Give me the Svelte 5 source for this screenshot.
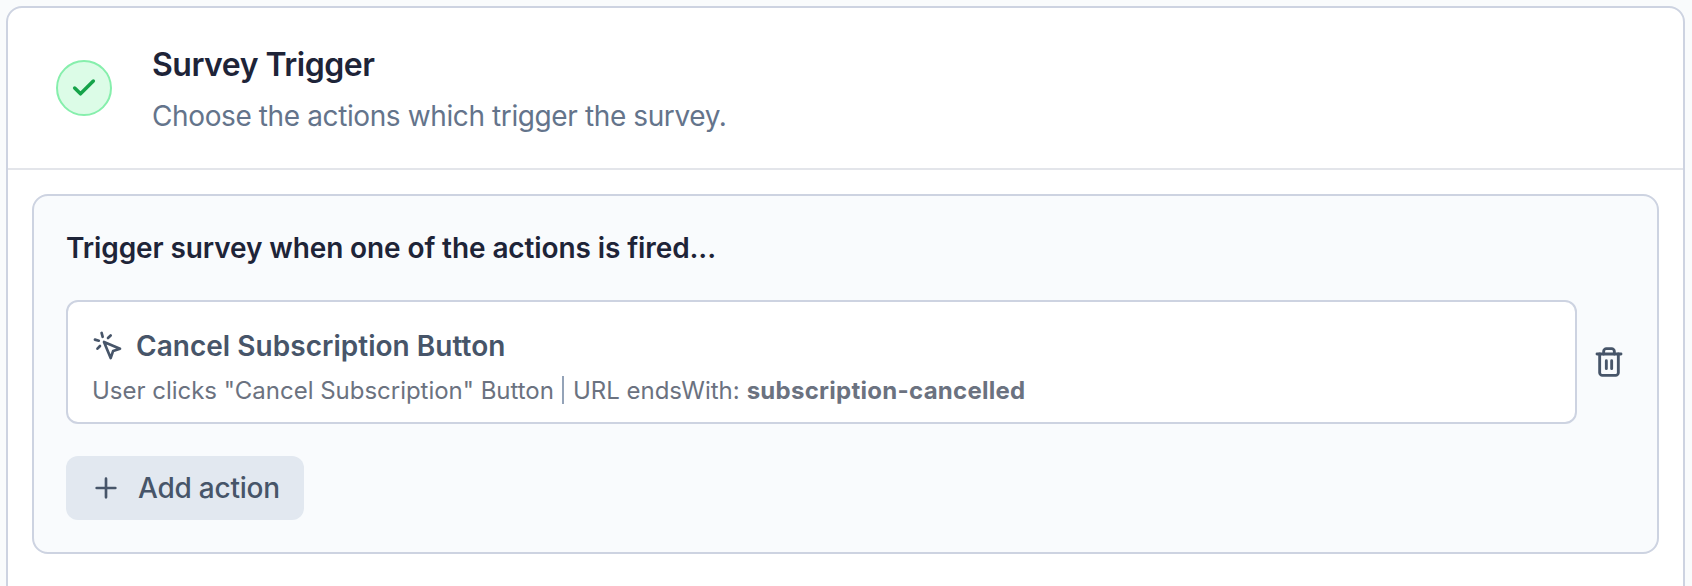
<script>
  const actions = [
    {
      name: 'Cancel Subscription Button',
      description: 'User clicks "Cancel Subscription" Button',
      rule: 'URL endsWith:',
      value: 'subscription-cancelled'
    }
  ];
</script>

<main class="page">
  <section class="card">
    <header class="card-header">
      <span class="status">
        <svg viewBox="0 0 24 24" width="28" height="28" stroke-width="3" class="icon">
          <path d="M20 6 9 17l-5-5" />
        </svg>
      </span>
      <div class="titles">
        <h1>Survey Trigger</h1>
        <p class="subtitle">Choose the actions which trigger the survey.</p>
      </div>
    </header>

    <div class="panel">
      <h2>Trigger survey when one of the actions is fired...</h2>

      {#each actions as action}
        <div class="row">
          <article class="action">
            <div class="action-title">
              <svg viewBox="0 0 24 24" width="32" height="32" stroke-width="2" class="icon">
                <path d="m9 9 5 12 1.8-5.2L21 14Z" />
                <path d="M7.2 2.2 8 5.1" />
                <path d="m5.1 8-2.9-.8" />
                <path d="M14 4.1 12 6" />
                <path d="m6 12-1.9 2" />
              </svg>
              <h3>{action.name}</h3>
            </div>
            <div class="details">
              <span class="description">{action.description}</span>
              <span class="separator"></span>
              <span class="rule">{action.rule}</span>
              <strong>{action.value}</strong>
            </div>
          </article>
          <button class="remove" aria-label="Remove action">
            <svg viewBox="0 0 24 24" width="32" height="32" stroke-width="2.15" class="icon">
              <path d="M3 6h18" />
              <path d="M19 6v14c0 1-1 2-2 2H7c-1 0-2-1-2-2V6" />
              <path d="M8 6V4c0-1 1-2 2-2h4c1 0 2 1 2 2v2" />
              <path d="M10 11v6M14 11v6" />
            </svg>
          </button>
        </div>
      {/each}

      <button class="add">
        <svg viewBox="0 0 24 24" width="32" height="32" stroke-width="2" class="icon">
          <path d="M5 12h14M12 5v14" />
        </svg>
        <span>Add action</span>
      </button>
    </div>
  </section>
</main>

<style>
  :global(body) {
    margin: 0;
    background: #f9fbfc;
  }

  .page {
    box-sizing: border-box;
    height: 586px;
    padding: 6px 7px 0 6px;
    overflow: hidden;
    font-family: Inter, 'Liberation Sans', sans-serif;
    white-space: nowrap;
  }

  .page * {
    box-sizing: border-box;
  }

  h1, h2, h3, p {
    margin: 0;
  }

  button {
    border: 0;
    padding: 0;
    background: none;
    font: inherit;
  }

  .icon {
    display: block;
    flex: none;
    fill: none;
    stroke: currentColor;
    stroke-linecap: round;
    stroke-linejoin: round;
  }

  .card {
    height: 640px;
    border: 2px solid #cdd3e1;
    border-radius: 16px;
    background: #fff;
  }

  .card-header {
    display: flex;
    align-items: center;
    gap: 40px;
    height: 162px;
    padding: 0 48px;
    border-bottom: 2px solid #e3e5ea;
  }

  .status {
    display: grid;
    place-items: center;
    width: 56px;
    height: 56px;
    border: 2px solid #86efac;
    border-radius: 50%;
    background: #dcfce7;
    color: #16a34a;
  }

  h1 {
    font-size: 32px;
    line-height: 56px;
    font-weight: 600;
    letter-spacing: -0.5px;
    color: #1e2438;
  }

  .subtitle {
    font-size: 28px;
    line-height: 46px;
    letter-spacing: -0.39px;
    color: #64748b;
  }

  .panel {
    margin: 24px 24px 0;
    height: 360px;
    padding: 32px;
    border: 2px solid #cdd3e1;
    border-radius: 16px;
    background: #f9fbfd;
  }

  h2 {
    font-size: 28px;
    line-height: 40px;
    font-weight: 600;
    letter-spacing: -0.11px;
    color: #1e2438;
  }

  .row {
    display: flex;
    align-items: center;
    gap: 16px;
    margin-top: 32px;
  }

  .action {
    flex: 1;
    height: 124px;
    padding: 24px;
    border: 2px solid #cdd3e1;
    border-radius: 12px;
    background: #fff;
  }

  .action-title {
    display: flex;
    align-items: center;
    gap: 12px;
    height: 40px;
    color: #475569;
  }

  h3 {
    font-size: 28px;
    line-height: 40px;
    font-weight: 600;
    letter-spacing: 0.03px;
  }

  .details {
    display: flex;
    align-items: center;
    height: 32px;
    margin-top: 9px;
    font-size: 24px;
    line-height: 32px;
    color: #6b7280;
  }

  .description {
    letter-spacing: -0.02px;
  }

  .separator {
    width: 2px;
    height: 28px;
    margin: -2px 9px 0 8px;
    background: #94a3b8;
  }

  strong {
    margin-left: 7px;
    font-weight: 700;
    letter-spacing: 0.27px;
  }

  .remove {
    color: #475569;
  }

  .add {
    display: flex;
    align-items: center;
    gap: 16px;
    width: 238px;
    height: 64px;
    margin-top: 32px;
    padding: 0 24px;
    border-radius: 12px;
    background: #e2e8f0;
    color: #475569;
    font-size: 28px;
    font-weight: 500;
    letter-spacing: -0.22px;
  }
</style>
